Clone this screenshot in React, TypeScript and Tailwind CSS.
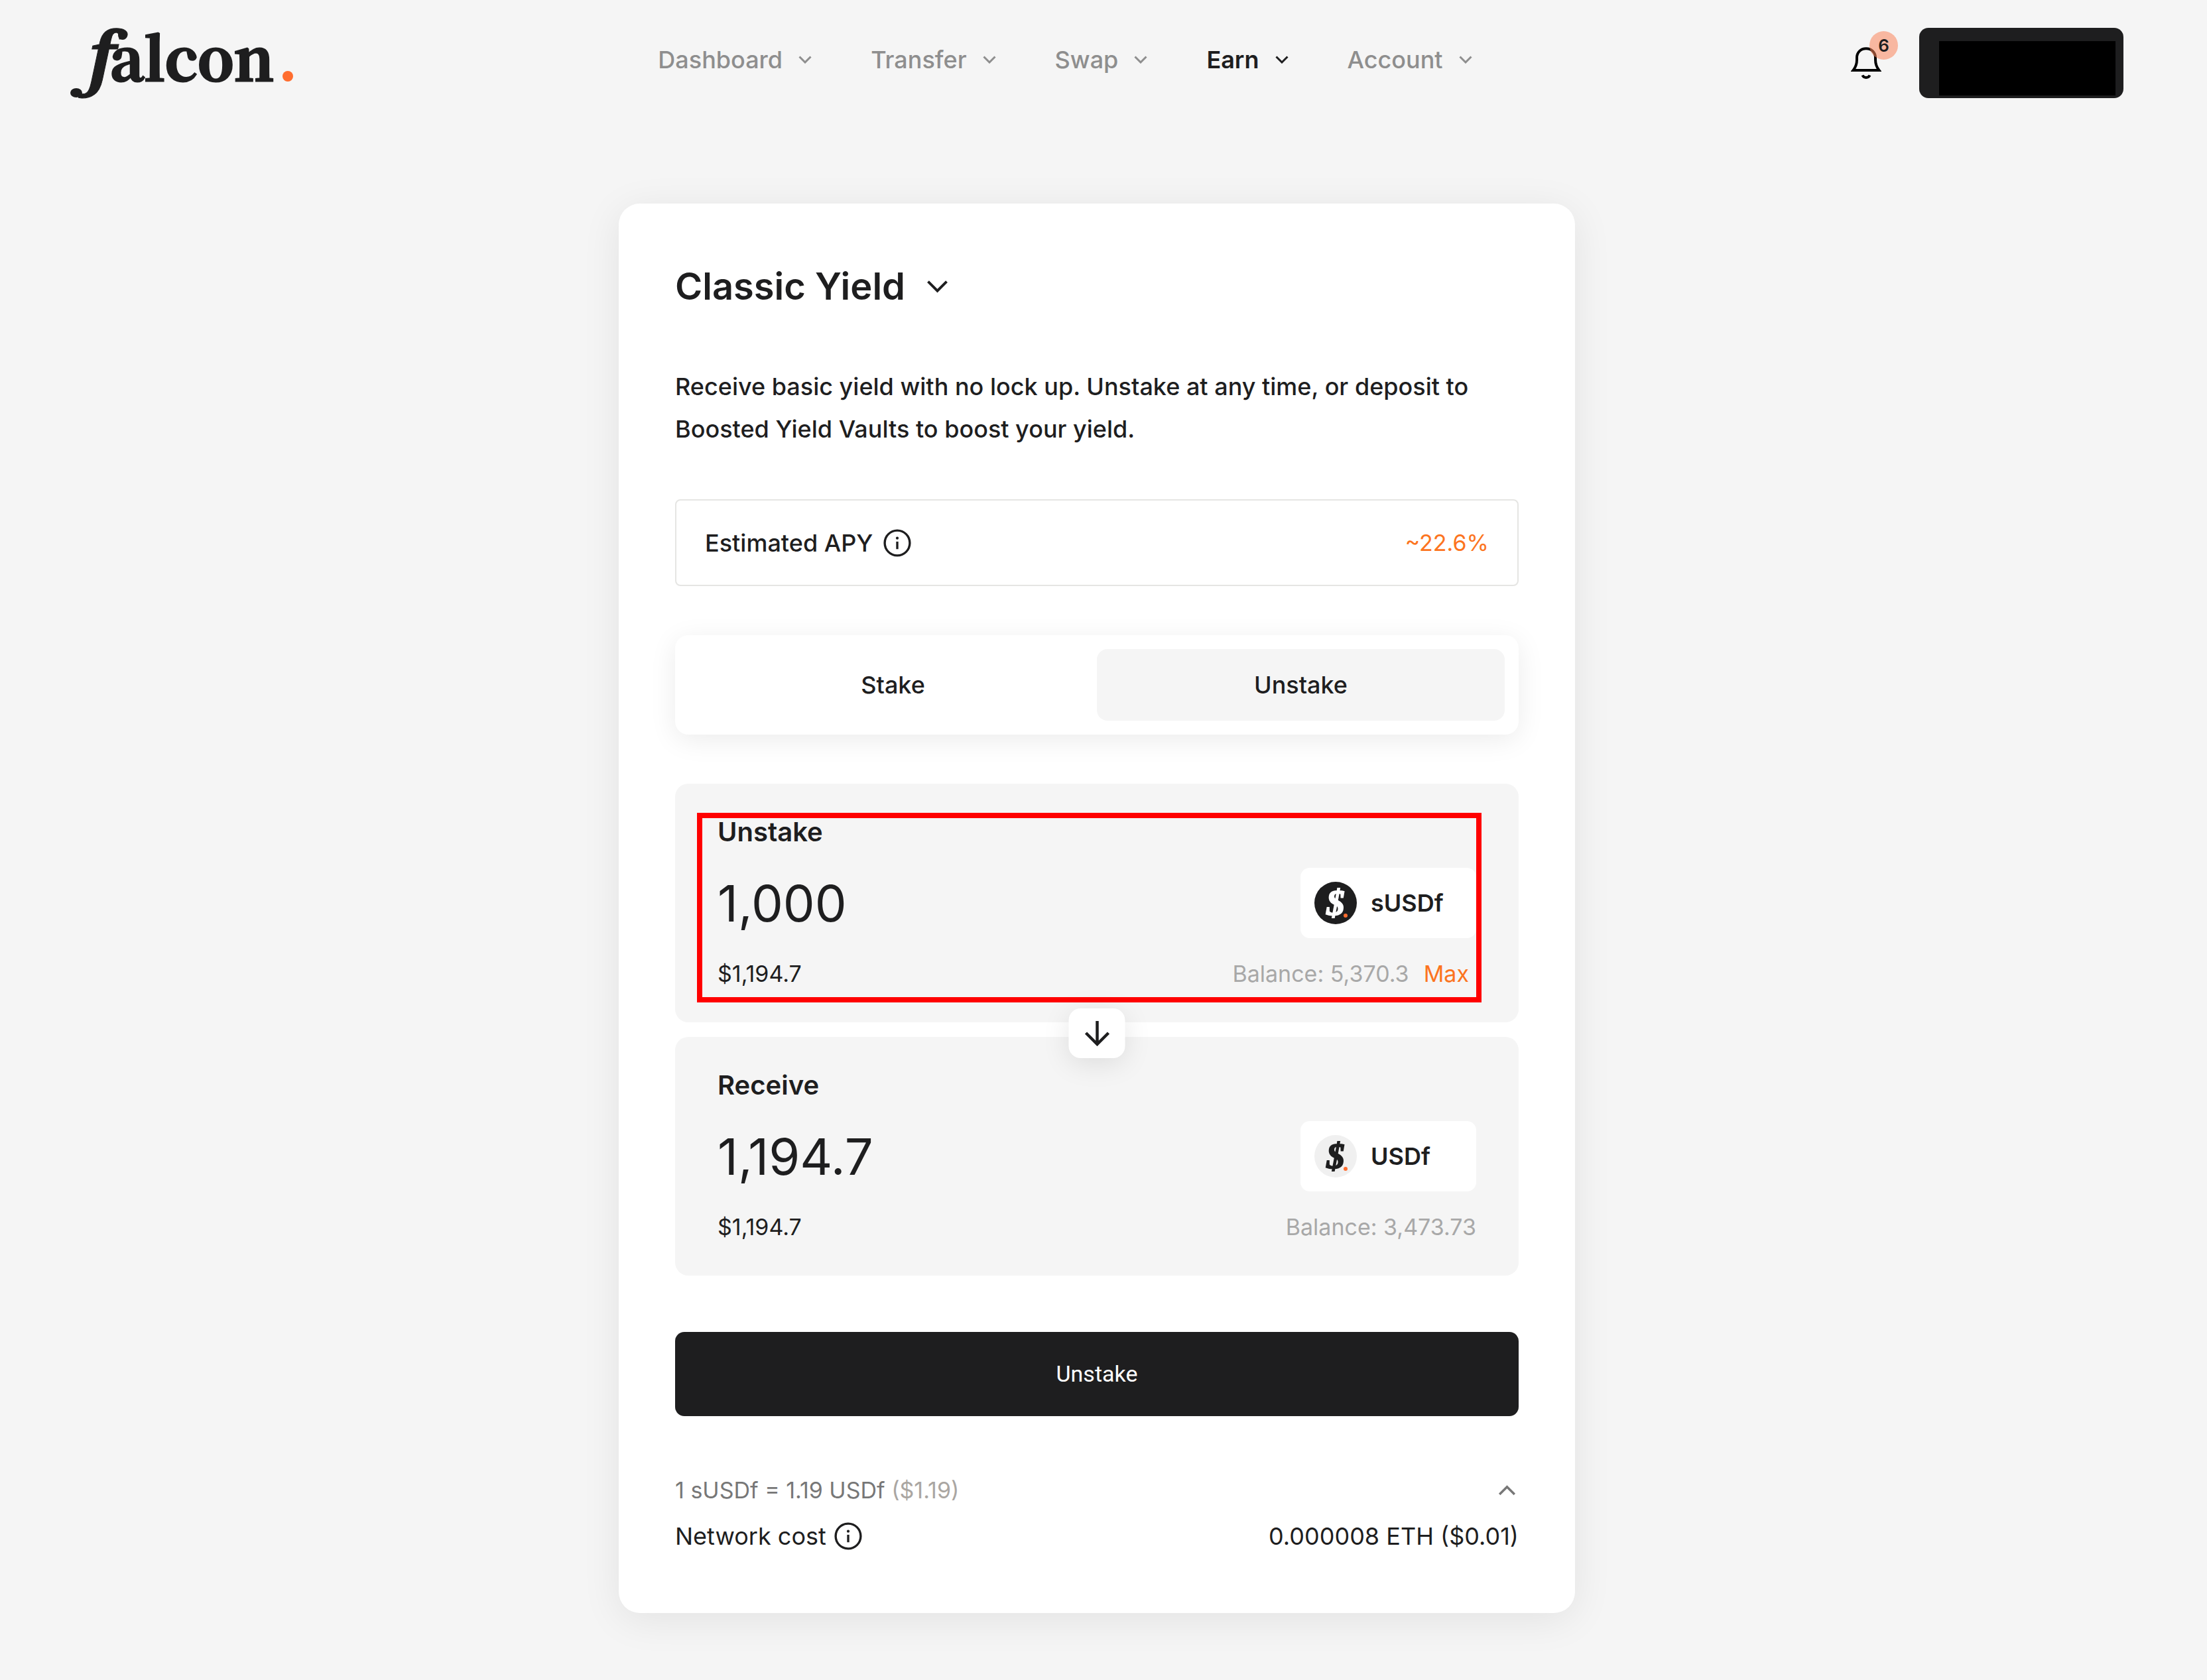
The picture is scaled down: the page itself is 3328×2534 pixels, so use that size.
import { useState } from 'react';
import type { ReactNode } from 'react';

function Chevron({ className, up = false, stroke = 3 }: { className: string; up?: boolean; stroke?: number }) {
  return (
    <svg viewBox="0 0 20 12" fill="none" stroke="currentColor" strokeWidth={stroke} className={className} aria-hidden="true">
      <path d={up ? 'M1.5 10.5 10 2l8.5 8.5' : 'M1.5 1.5 10 10l8.5-8.5'} />
    </svg>
  );
}

function InfoIcon() {
  return (
    <svg viewBox="0 0 20 20" fill="none" stroke="currentColor" strokeWidth="1.6" className="size-[42px] shrink-0" aria-hidden="true">
      <circle cx="10" cy="10" r="9" />
      <path d="M10 9v5.4" />
      <circle cx="10" cy="6.5" r="1" fill="currentColor" stroke="none" />
    </svg>
  );
}

function Logo() {
  return (
    <svg viewBox="0 -42 340 170" className="h-[170px] w-[340px] overflow-visible" role="img" aria-label="falcon.">
      <g fill="#1e1e1f" stroke="#1e1e1f" fontWeight="700">
        <text x="27" y="81" fontSize="105" fontStyle="italic" strokeWidth="1" fontFamily="Noto Serif, Liberation Serif, serif">
          f
        </text>
        <text x="60" y="80" fontSize="88" strokeWidth="3" fontFamily="Noto Serif CJK SC, Liberation Serif, serif">
          alcon
        </text>
      </g>
      <ellipse cx="9" cy="98" rx="9" ry="7" fill="#1e1e1f" />
      <circle cx="79" cy="11" r="7" fill="#1e1e1f" />
      <circle cx="328" cy="73" r="8" fill="#ff6d2f" />
    </svg>
  );
}

function BellIcon() {
  return (
    <svg viewBox="0 0 46 49" fill="none" stroke="#000" strokeWidth="4" className="h-[49px] w-[46px]" aria-hidden="true">
      <path d="M3.5 35C7.5 30 9 25 9 19v-3C9 8 15 2.2 23 2.2S37 8 37 16v3c0 6 1.500 11 5.500 16Z" />
      <path d="M17.500 42.500c2 4.500 9 4.500 11 0" />
    </svg>
  );
}

function TokenIcon({ dark }: { dark: boolean }) {
  return (
    <svg viewBox="0 0 64 64" className="size-16 shrink-0" aria-hidden="true">
      <circle cx="32" cy="32" r="32" fill={dark ? '#1e1e1f' : '#f0f0f0'} />
      <text
        x="32"
        y="50"
        textAnchor="middle"
        fontFamily="Liberation Serif, serif"
        fontWeight="700"
        fontStyle="italic"
        fontSize="54"
        fill={dark ? '#ffffff' : '#1e1e1f'}
        stroke={dark ? '#ffffff' : '#1e1e1f'}
        strokeWidth="2"
      >
        $
      </text>
      <circle cx="47" cy="51" r="3" fill="#ff6d2f" />
    </svg>
  );
}

function AmountPanel(props: {
  id: string;
  label: string;
  value: string;
  onChange?: (value: string) => void;
  fiat: string;
  token: string;
  dark: boolean;
  balance: string;
  max?: ReactNode;
  children?: ReactNode;
}) {
  return (
    <section className="relative flex flex-col gap-6 rounded-[20px] bg-[#f5f5f5] px-16 pt-[43px] pb-[43px]">
      <label htmlFor={props.id} className="text-[40px] leading-[60px] font-semibold">
        {props.label}
      </label>
      <div className="flex h-[106px] items-center justify-between gap-6">
        <input
          id={props.id}
          value={props.value}
          readOnly={!props.onChange}
          onChange={(e) => props.onChange?.(e.target.value)}
          className="h-[106px] min-w-0 flex-1 bg-transparent text-[76px] outline-none"
        />
        <button type="button" className="flex h-[106px] w-[265px] items-center gap-[21px] rounded-[14px] bg-white px-[21px] text-[36px] font-semibold">
          <TokenIcon dark={props.dark} />
          {props.token}
        </button>
      </div>
      <div className="flex items-center justify-between text-[34px] leading-[60px]">
        <span>{props.fiat}</span>
        <div className="flex gap-[22px] text-[#a8a8a8]">
          <span>Balance: {props.balance}</span>
          {props.max}
        </div>
      </div>
      {props.children}
    </section>
  );
}

const links = ['Dashboard', 'Transfer', 'Swap', 'Earn', 'Account'];

export default function App() {
  const [amount, setAmount] = useState('1,000');

  return (
    <div className="min-h-screen bg-[#f5f5f5] font-['Inter',sans-serif] text-[#1e1e1f]">
      <header className="flex h-[154px] items-start justify-between pr-[126px] pl-[106px]">
        <a href="#home">
          <Logo />
        </a>
        <nav className="mt-[42px] flex h-24 items-center gap-[89px] text-[36px]">
          {links.map((name) => (
            <a
              key={name}
              href={'#' + name.toLowerCase()}
              className={name === 'Earn' ? 'flex items-center gap-6 font-semibold' : 'flex items-center gap-6 font-medium text-[#8e8e8e]'}
            >
              {name}
              <Chevron className="h-3 w-5" />
            </a>
          ))}
        </nav>
        <div className="mt-[42px] flex h-[106px] items-center gap-[57px] pl-[25px]">
          <button type="button" aria-label="Notifications" className="relative">
            <BellIcon />
            <span className="absolute -top-6 left-7 flex size-[43px] items-center justify-center rounded-full bg-[#f9835a]/55 text-[26px] font-semibold">
              6
            </span>
          </button>
          <button type="button" aria-label="Wallet" className="h-[106px] w-[308px] rounded-[14px] bg-[#1e1e1f] pt-5 pr-3 pb-1 pl-[30px]">
            <span className="block h-full bg-black" />
          </button>
        </div>
      </header>

      <main className="flex justify-center pt-[153px] pr-5 pb-[101px]">
        <div className="w-full max-w-[1442px] rounded-[32px] bg-white px-[85px] pt-[85px] pb-[89px] shadow-[0_10px_60px_rgba(0,0,0,0.08)]">
          <h1>
            <button type="button" className="flex items-center gap-8 text-[56px] leading-[80px] font-semibold">
              Classic Yield
              <Chevron className="h-5 w-[33px]" stroke={2.4} />
            </button>
          </h1>
          <p className="mt-[79px] text-[36px] leading-[64px] font-medium">
            Receive basic yield with no lock up. Unstake at any time, or deposit to Boosted Yield Vaults to boost your yield.
          </p>

          <div className="mt-[74px] flex h-[131px] items-center justify-between rounded-[8px] border-2 border-[#e5e5e3] px-[43px]">
            <span className="flex items-center gap-4 text-[36px] font-medium">
              Estimated APY
              <InfoIcon />
            </span>
            <span className="text-[34px] text-[#fc7420]">~22.6%</span>
          </div>

          <div className="mt-[74px] grid h-[150px] grid-cols-2 rounded-[20px] p-[21px] text-[36px] font-medium shadow-[0_8px_42px_rgba(0,0,0,0.08)]">
            <button type="button">Stake</button>
            <button type="button" className="rounded-[16px] bg-[#f5f5f5]">
              Unstake
            </button>
          </div>

          <div className="mt-[74px] flex flex-col gap-[22px]">
            <AmountPanel
              id="unstake-amount"
              label="Unstake"
              value={amount}
              onChange={setAmount}
              fiat="$1,194.7"
              token="sUSDf"
              dark
              balance="5,370.3"
              max={
                <button type="button" onClick={() => setAmount('5,370.3')} className="pr-[11px] text-[#fc7420]">
                  Max
                </button>
              }
            >
              <div className="pointer-events-none absolute top-11 right-14 bottom-[30px] left-[33px] border-8 border-[#ff0000]" />
            </AmountPanel>
            <AmountPanel id="receive-amount" label="Receive" value="1,194.7" fiat="$1,194.7" token="USDf" dark={false} balance="3,473.73">
              <button
                type="button"
                aria-label="Switch direction"
                className="absolute -top-[43px] left-1/2 flex h-[75px] w-[85px] -translate-x-1/2 items-center justify-center rounded-[18px] bg-white shadow-[0_8px_42px_rgba(0,0,0,0.1)]"
              >
                <svg viewBox="0 0 38 38" fill="none" stroke="currentColor" strokeWidth="4.500" className="size-[38px]" aria-hidden="true">
                  <path d="M19 0v35M2 18l17 17 17-17" />
                </svg>
              </button>
            </AmountPanel>
          </div>

          <button type="button" className="mt-[85px] h-[127px] w-full rounded-[14px] bg-[#1e1e1f] font-['Roboto',sans-serif] text-[34px] text-white">
            Unstake
          </button>

          <div className="mt-[85px] flex flex-col gap-[15px] text-[36px] leading-[54px]">
            <button type="button" className="flex items-center justify-between pr-1 text-[34px] text-[#777777]">
              <span>
                1 sUSDf = 1.19 USDf <span className="text-[#aaa6a2]">($1.19)</span>
              </span>
              <Chevron className="h-4 w-[27px]" up stroke={2.6} />
            </button>
            <div className="flex items-center justify-between">
              <span className="flex items-center gap-3">
                Network cost
                <InfoIcon />
              </span>
              <span>0.000008 ETH ($0.01)</span>
            </div>
          </div>
        </div>
      </main>
    </div>
  );
}
